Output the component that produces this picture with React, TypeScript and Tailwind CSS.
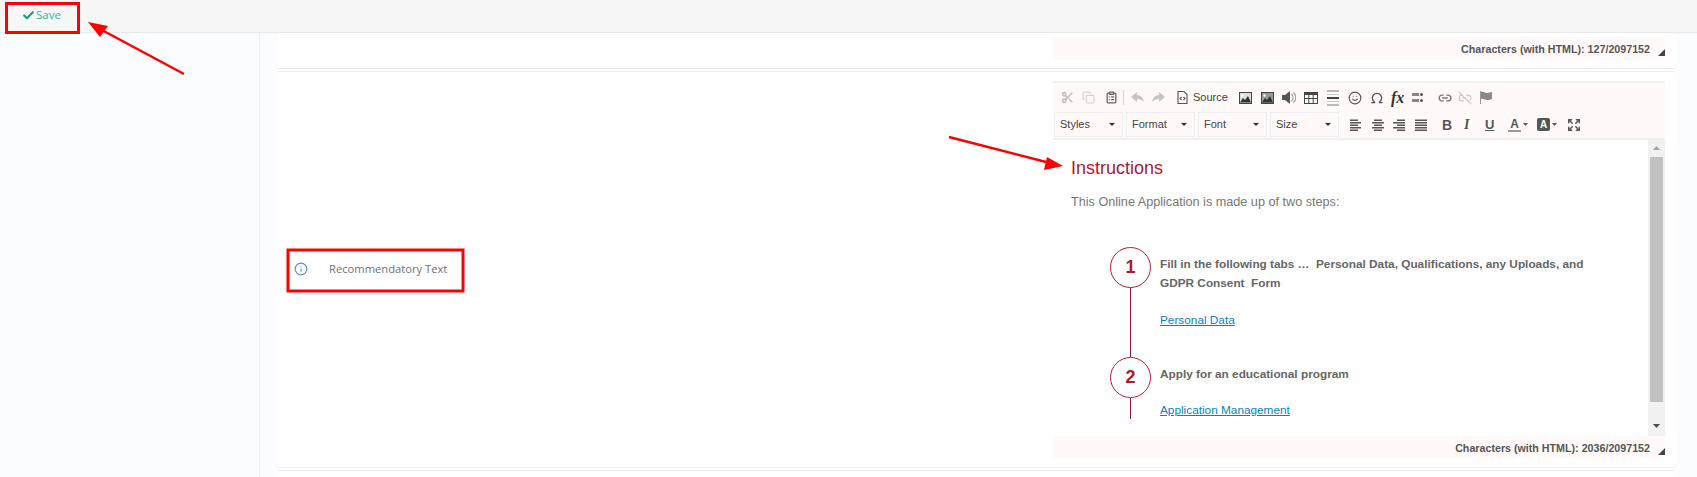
import { Check, ClipboardList, Copy, Expand, Info, Link2, Link2Off, Omega, Scissors, Smile } from 'lucide-react'

const combos = ['Styles', 'Format', 'Font', 'Size']

function Counter({ value }: { value: string }) {
  return (
    <div className="flex h-[23px] items-center justify-end bg-[#fffaf9] pt-[2px] font-['Liberation_Sans',sans-serif] text-[10.7px] font-bold text-[#555]">
      <span>Characters (with HTML): {value}</span>
      <svg className="ml-[8px] mt-[5px]" width="7" height="7" viewBox="0 0 7 7">
        <polygon points="7,0 7,7 0,7" fill="#444" />
      </svg>
    </div>
  )
}

function ImageIcon({ dark }: { dark?: boolean }) {
  return (
    <svg width="13" height="12" viewBox="0 0 13 12">
      <rect x="0.500" y="0.500" width="12" height="11" fill={dark ? '#999' : '#ddd'} stroke="#444" />
      <polygon points="1,10.500 4,6 6,8 9,4 12,10.500" fill="#333" />
      <circle cx="3.500" cy="3.500" r="1.200" fill="#fff" />
    </svg>
  )
}

function Arrow({ flip }: { flip?: boolean }) {
  return (
    <svg width="13" height="11" viewBox="0 0 13 11" className={flip ? '-scale-x-100' : ''}>
      <path d="M0 5 L6 0 V3 C10 3 12 6 13 10 C11 8 9 7 6 7 V10 Z" fill="#c4c4c4" />
    </svg>
  )
}

function Align({ rows, side }: { rows: number[]; side: 'left' | 'center' | 'right' }) {
  return (
    <svg width="12" height="12" viewBox="0 0 12 12">
      {rows.map((w, i) => (
        <rect
          key={i}
          x={side === 'left' ? 0 : side === 'right' ? 12 - w : (12 - w) / 2}
          y={i * 2.500 + 0.500}
          width={w}
          height="1.500"
          fill="#555"
        />
      ))}
    </svg>
  )
}

function Caret({ className }: { className: string }) {
  return (
    <svg width="5" height="3" viewBox="0 0 5 3" className={className}>
      <polygon points="0,0 5,0 2.500,3" fill="#555" />
    </svg>
  )
}

function Toolbar() {
  return (
    <div className="h-[59px] border-y-2 border-[#f0f0f0] bg-[#fffaf9] font-['Liberation_Sans',sans-serif]">
      <div className="flex h-[29px] items-center pl-[8px]">
        <Scissors size={13} strokeWidth={2.8} className="mr-[8px] text-[#bdbdbd]" />
        <Copy size={13} className="mr-[10px] text-[#d2d2d2]" />
        <ClipboardList size={13} strokeWidth={2.4} className="mr-[5px] text-[#666]" />
        <span className="mr-[7px] h-[15px] w-px bg-[#d5d5d5]" />
        <Arrow />
        <span className="w-[8px]" />
        <Arrow flip />
        <span className="w-[12px]" />
        <svg width="11" height="13" viewBox="0 0 11 13" className="mr-[5px]" fill="none" stroke="#555" strokeWidth="1.100">
          <path d="M1 0.500h6l3 3v9H1z" />
          <path d="M4.500 6l-1.500 1.500 1.500 1.500M6.500 6l1.500 1.500-1.500 1.500" />
        </svg>
        <span className="mr-[13px] w-[33px] text-[11px] text-[#444]">Source</span>
        <ImageIcon />
        <span className="w-[9px]" />
        <ImageIcon dark />
        <span className="w-[8px]" />
        <svg width="14" height="13" viewBox="0 0 14 13" className="mr-[8px]">
          <path d="M0 4h3l5-4v13l-5-4H0z" fill="#555" />
          <path d="M9.500 3c2 2 2 5 0 7M11.500 1.500c3 3 3 7 0 10" fill="none" stroke="#999" strokeWidth="1.200" />
        </svg>
        <svg width="14" height="12" viewBox="0 0 14 12" className="mr-[9px]">
          <rect x="0.500" y="0.500" width="13" height="11" fill="#fff" stroke="#444" />
          <rect x="0" y="0" width="14" height="3" fill="#444" />
          <path d="M4.800 3v8M9.200 3v8M1 6.500h12" stroke="#444" />
        </svg>
        <span className="mr-[9px] flex w-[12px] flex-col gap-[2px]">
          <span className="h-[2px] bg-[#bbb]" />
          <span className="h-px bg-[#ccc]" />
          <span className="h-[2px] bg-[#444]" />
          <span className="h-px bg-[#ccc]" />
          <span className="h-[2px] bg-[#bbb]" />
        </span>
        <Smile size={14} className="mr-[8px] text-[#555]" />
        <Omega size={14} strokeWidth={2.2} className="mr-[7px] text-[#555]" />
        <span className="mr-[8px] w-[13px] font-['Liberation_Serif',serif] text-[16px] font-bold italic leading-none text-[#333]">fx</span>
        <span className="mr-[13px] grid w-[13px] grid-cols-2 gap-x-[2px] gap-y-[3px]">
          <span className="h-[3px] w-[7px] bg-[#888]" />
          <span className="h-[3px] w-[3px] rounded-full bg-[#555]" />
          <span className="h-[3px] w-[7px] bg-[#888]" />
          <span className="h-[3px] w-[3px] rounded-full bg-[#555]" />
        </span>
        <Link2 size={14} strokeWidth={2.4} className="mr-[6px] text-[#777]" />
        <Link2Off size={14} className="mr-[7px] text-[#c5c5c5]" />
        <svg width="13" height="13" viewBox="0 0 13 13">
          <path d="M1 0h1v13H1z" fill="#999" />
          <path d="M2 1c3-1 4 1 6 1s3-1 5-1v7c-2 1-3 1-5 1s-3-2-6-1z" fill="#888" />
        </svg>
      </div>
      <div className="flex h-[25px] items-center pl-px text-[#555]">
        <div className="flex gap-[3px]">
          {combos.map((combo) => (
            <div key={combo} className="flex h-[25px] w-[69px] items-center justify-between border border-[#eeeeee] pl-[5px] pr-[7px] text-[11px] text-[#444]">
              <span>{combo}</span>
              <svg width="6" height="3" viewBox="0 0 6 3">
                <polygon points="0,0 6,0 3,3" fill="#333" />
              </svg>
            </div>
          ))}
        </div>
        <span className="w-[11px]" />
        <Align side="left" rows={[8, 11, 8, 11, 8]} />
        <span className="w-[10px]" />
        <Align side="center" rows={[8, 12, 8, 12, 8]} />
        <span className="w-[9px]" />
        <Align side="right" rows={[8, 12, 8, 12, 8]} />
        <span className="w-[10px]" />
        <Align side="left" rows={[12, 12, 12, 12, 12]} />
        <span className="w-[15px]" />
        <span className="mr-[11px] w-[11px] text-[14px] font-bold leading-none">B</span>
        <span className="mr-[11px] w-[10px] font-['Liberation_Serif',serif] text-[14px] font-bold italic leading-none">I</span>
        <span className="mr-[12px] w-[11px] text-[13px] font-bold leading-none underline">U</span>
        <span className="flex w-[13px] flex-col items-center text-[12px] font-bold leading-[12px]">
          A<span className="h-[2px] w-full bg-[#999]" />
        </span>
        <Caret className="ml-[2px] mr-[9px]" />
        <span className="flex h-[13px] w-[13px] items-center justify-center rounded-[2px] bg-[#555] text-[10px] font-bold text-white">A</span>
        <Caret className="ml-[2px] mr-[10px]" />
        <Expand size={14} strokeWidth={2.5} />
      </div>
    </div>
  )
}

function Step({ n }: { n: number }) {
  return (
    <div className="flex h-[41px] w-[41px] items-center justify-center rounded-full border border-[#b91c31] font-['Liberation_Sans',sans-serif] text-[18px] font-bold text-[#ab1a30]">
      {n}
    </div>
  )
}

function EditorContent() {
  return (
    <div className="flex h-[296px]">
      <div className="flex-1 overflow-hidden pl-[18px] font-['Liberation_Sans',sans-serif] text-[#666]">
        <h2 className="mt-[16px] text-[18px] leading-[24px] text-[#ab1a30]">Instructions</h2>
        <p className="mt-[14px] text-[12.65px] leading-[16px] text-[#777]">This Online Application is made up of two steps:</p>
        <div className="ml-[39px] mt-[37px] flex">
          <div className="flex w-[41px] flex-col items-center">
            <Step n={1} />
            <div className="h-[69px] w-px bg-[#8f1a2b]" />
            <Step n={2} />
            <div className="h-[21px] w-px bg-[#8f1a2b]" />
          </div>
          <div className="ml-[9px] text-[11.8px] leading-[19px]">
            <p className="mt-[8px] font-bold">
              Fill in the following tabs …&nbsp; Personal Data, Qualifications, any Uploads, and
              <br />
              GDPR Consent&nbsp; Form
            </p>
            <a className="mt-[18px] block text-[#0782c1] underline">Personal Data</a>
            <p className="mt-[35px] font-bold">Apply for an educational program</p>
            <a className="mt-[17px] block text-[#0782c1] underline">Application Management</a>
          </div>
        </div>
      </div>
      <div className="flex w-[17px] flex-col items-center bg-[#f1f1f1]">
        <svg className="mt-[6px]" width="7" height="4" viewBox="0 0 7 4">
          <polygon points="0,4 7,4 3.500,0" fill="#a3a3a3" />
        </svg>
        <div className="mt-[7px] h-[245px] w-[13px] bg-[#c1c1c1]" />
        <svg className="mt-[22px]" width="7" height="4" viewBox="0 0 7 4">
          <polygon points="0,0 7,0 3.500,4" fill="#505050" />
        </svg>
      </div>
    </div>
  )
}

// red arrows and boxes drawn on top of the screenshot
function Annotations() {
  return (
    <svg className="pointer-events-none absolute left-0 top-0" width="1697" height="477" viewBox="0 0 1697 477">
      <g fill="none" stroke="#ff0000" strokeWidth="3">
        <rect x="6.500" y="3.500" width="72" height="29" />
        <rect x="288" y="250" width="175" height="41" />
      </g>
      <g stroke="#ff0000" strokeWidth="2.500">
        <line x1="184" y1="74" x2="100" y2="29" />
        <line x1="949" y1="137" x2="1050" y2="163" />
      </g>
      <polygon points="88,22 108,26 100,37" fill="#ff0000" />
      <polygon points="1063,166 1044,170 1047,157" fill="#ff0000" />
    </svg>
  )
}

export default function App() {
  return (
    <div className="relative h-[477px] w-[1697px] overflow-hidden bg-[#fbfcff]">
      {/* Top bar */}
      <div className="flex h-[33px] items-center border-b border-[#e8e8e8] bg-[#f7f7f7] pb-[2px] pl-[22px] font-['Open_Sans',sans-serif] text-[11.5px] text-[#26b99a]">
        <Check size={13} strokeWidth={4} className="mr-px text-[#1f9c85]" />
        <span>Save</span>
      </div>

      <div className="flex">
        {/* Sidebar */}
        <div className="h-[444px] w-[260px] border-r border-[#eff0f4]" />

        {/* Main */}
        <div className="ml-[18px] w-[1396px] bg-white">
          <div className="h-[35px] pl-[775px] pr-[9px] pt-[4px]">
            <Counter value="127/2097152" />
          </div>
          <div className="h-[4px] border-y border-[#eeeeee]" />
          <div className="flex h-[395px] pt-[9px]">
            <div className="flex w-[775px] items-center pb-[10px] pl-[16px] font-['Open_Sans',sans-serif] text-[11.2px] text-[#6b7280]">
              <Info size={14} className="text-[#5b8fd9]" />
              <span className="ml-[21px]">Recommendatory Text</span>
            </div>
            <div className="w-[612px]">
              <Toolbar />
              <EditorContent />
              <Counter value="2036/2097152" />
            </div>
          </div>
          <div className="h-[4px] border-y border-[#eeeeee]" />
        </div>
      </div>

      <Annotations />
    </div>
  )
}
